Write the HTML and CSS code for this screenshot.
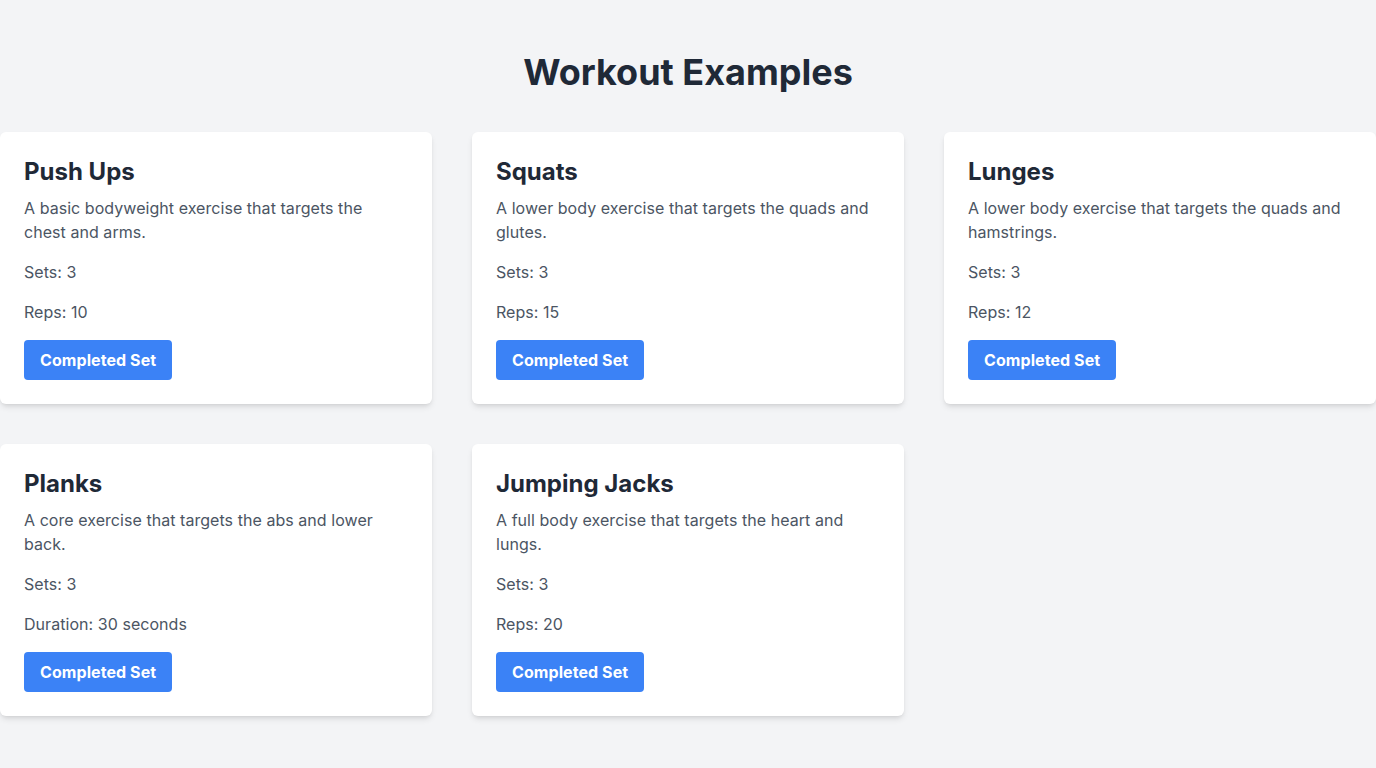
FILE: index.html
```html
<!DOCTYPE html>
<html lang="en">
<head>
<meta charset="utf-8">
<title>Workout Examples</title>
<link rel="stylesheet" href="styles.css">
</head>
<body>
<main class="page">
  <h1 class="page-title">Workout Examples</h1>
  <div class="grid">
    <div class="card">
      <h2 class="card-title">Push Ups</h2>
      <p class="card-desc">A basic bodyweight exercise that targets the chest and arms.</p>
      <p class="card-stat">Sets: 3</p>
      <p class="card-stat">Reps: 10</p>
      <button class="btn">Completed Set</button>
    </div>
    <div class="card">
      <h2 class="card-title">Squats</h2>
      <p class="card-desc">A lower body exercise that targets the quads and glutes.</p>
      <p class="card-stat">Sets: 3</p>
      <p class="card-stat">Reps: 15</p>
      <button class="btn">Completed Set</button>
    </div>
    <div class="card">
      <h2 class="card-title">Lunges</h2>
      <p class="card-desc">A lower body exercise that targets the quads and hamstrings.</p>
      <p class="card-stat">Sets: 3</p>
      <p class="card-stat">Reps: 12</p>
      <button class="btn">Completed Set</button>
    </div>
    <div class="card">
      <h2 class="card-title">Planks</h2>
      <p class="card-desc">A core exercise that targets the abs and lower back.</p>
      <p class="card-stat">Sets: 3</p>
      <p class="card-stat">Duration: 30 seconds</p>
      <button class="btn">Completed Set</button>
    </div>
    <div class="card">
      <h2 class="card-title">Jumping Jacks</h2>
      <p class="card-desc">A full body exercise that targets the heart and lungs.</p>
      <p class="card-stat">Sets: 3</p>
      <p class="card-stat">Reps: 20</p>
      <button class="btn">Completed Set</button>
    </div>
  </div>
</main>
</body>
</html>
```

FILE: styles.css
```css
* { box-sizing: border-box; }
html, body {
  margin: 0;
  padding: 0;
  background: #f3f4f6;
  font-family: Inter, "Liberation Sans", sans-serif;
  color: #1f2937;
}
.page {
  padding: 52px 0 40px;
}
.page-title {
  margin: 0 0 40px;
  text-align: center;
  font-size: 36px;
  line-height: 40px;
  font-weight: 700;
  color: #1f2937;
}
.grid {
  display: grid;
  grid-template-columns: repeat(3, 1fr);
  gap: 40px;
}
.card {
  background: #ffffff;
  border-radius: 6px;
  box-shadow: 0 4px 6px -1px rgba(0,0,0,0.1), 0 2px 4px -2px rgba(0,0,0,0.1);
  padding: 24px;
}
.card-title {
  margin: 0 0 8px;
  font-size: 24px;
  line-height: 32px;
  font-weight: 700;
  color: #1f2937;
}
.card-desc,
.card-stat {
  margin: 0 0 16px;
  font-size: 16px;
  line-height: 24px;
  letter-spacing: 0.05px;
  color: #4b5563;
}
.btn {
  display: inline-block;
  border: none;
  background: #3b82f6;
  color: #ffffff;
  font-family: Inter, "Liberation Sans", sans-serif;
  font-size: 16px;
  line-height: 24px;
  font-weight: 700;
  letter-spacing: 0.08px;
  padding: 8px 16px;
  border-radius: 4px;
  cursor: pointer;
}
```
